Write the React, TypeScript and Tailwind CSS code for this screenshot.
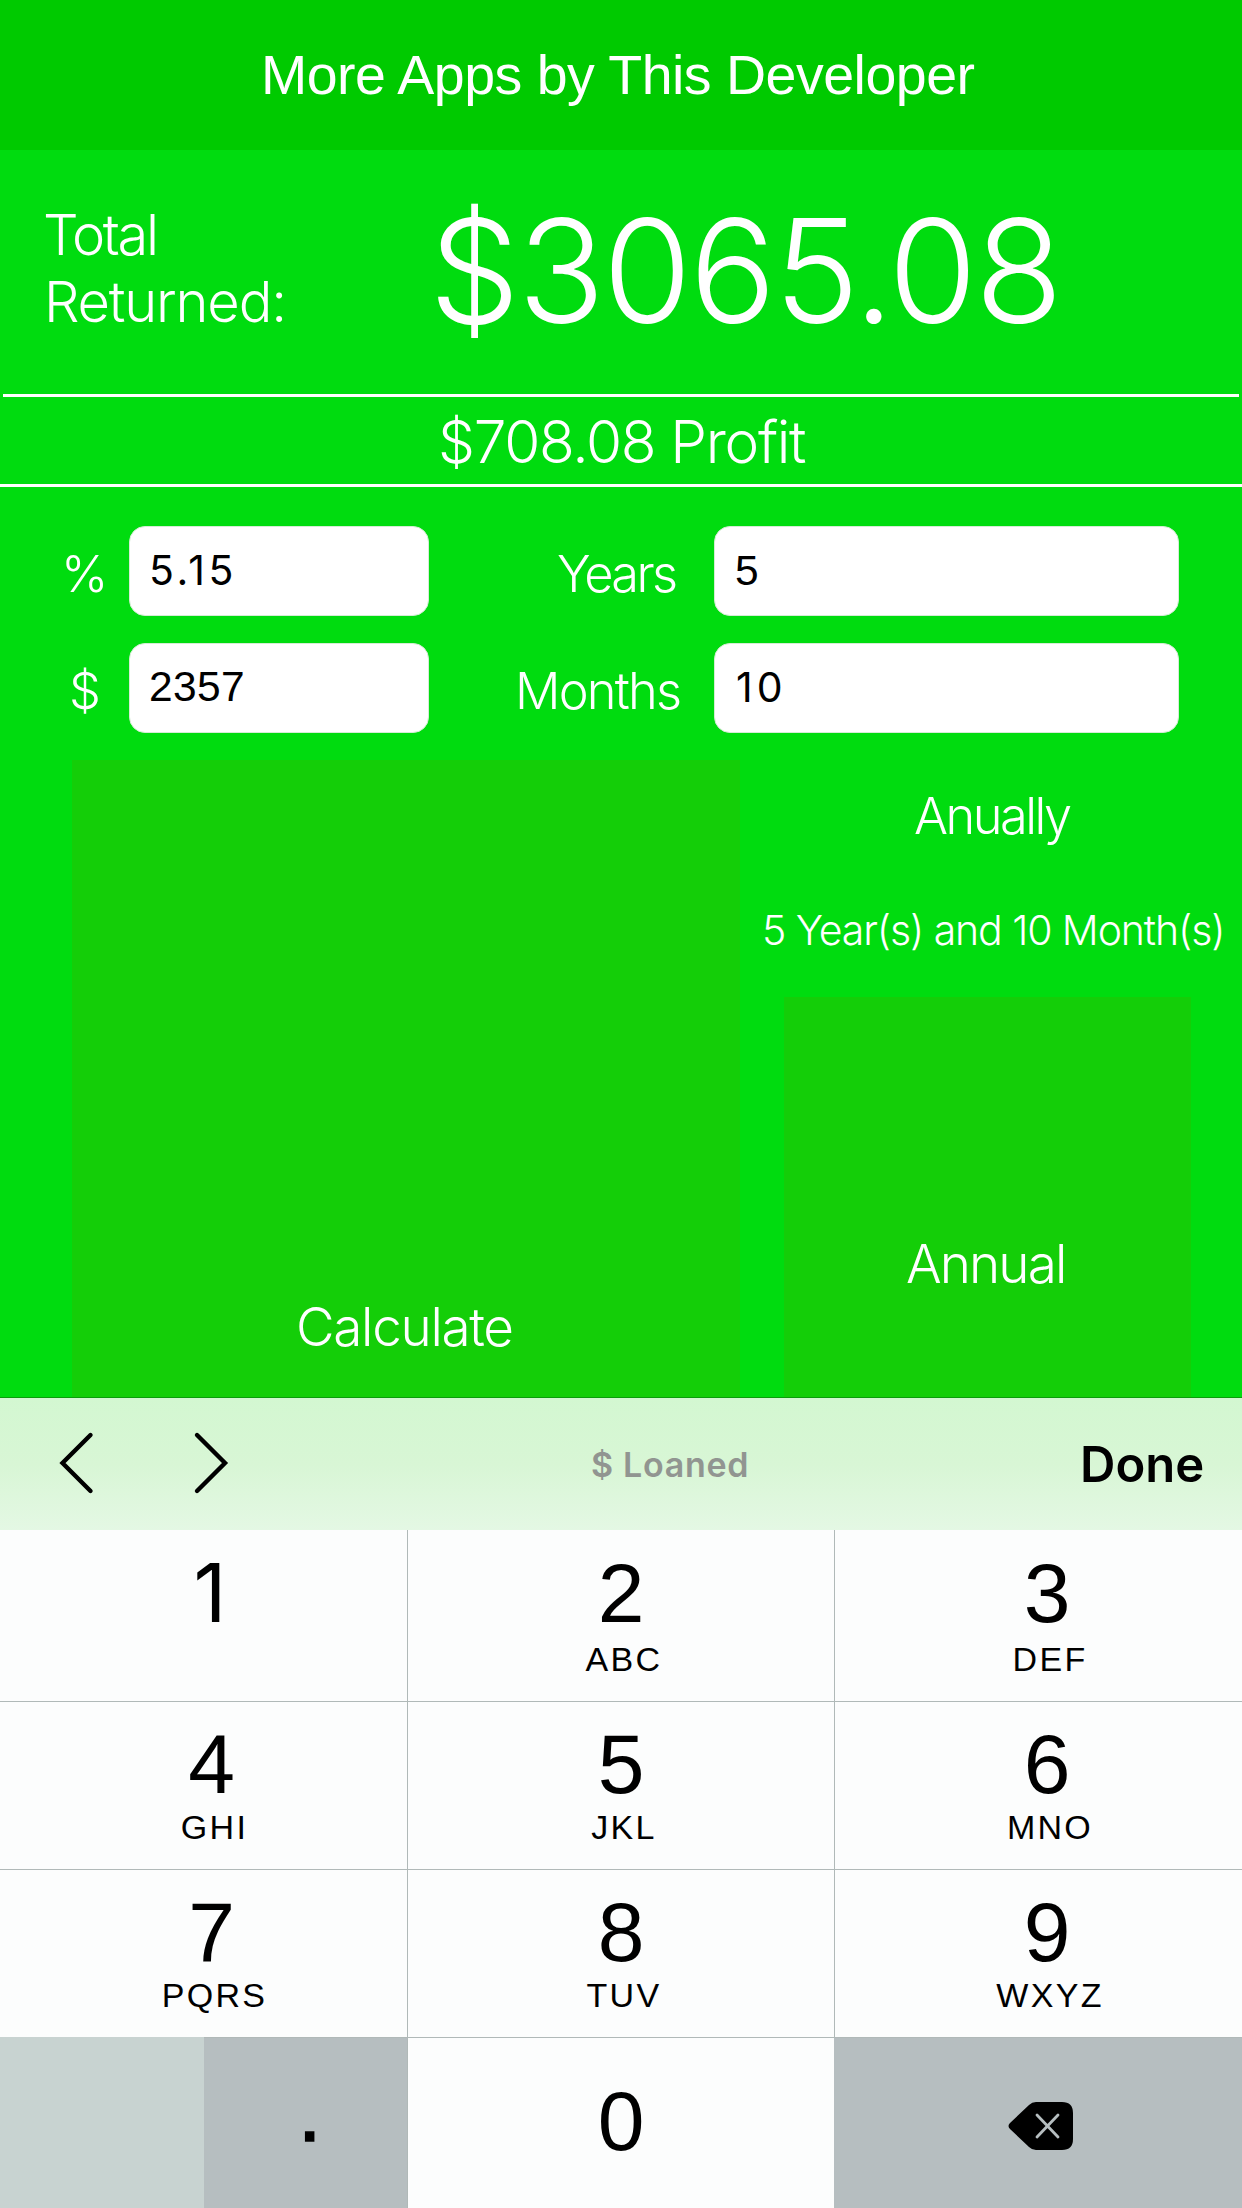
import React from "react";

const LIGHT = "font-[Inter,sans-serif] font-light whitespace-nowrap text-white";

function Field({ value, className }: { value: string; className: string }) {
  return (
    <div
      className={`flex h-[90px] items-center rounded-[16px] border border-[#d5ecd5] bg-white leading-none text-black ${className}`}
    >
      {value}
    </div>
  );
}

function Label({ text, className }: { text: string; className: string }) {
  return (
    <div className={`flex h-[90px] items-center pt-[6px] text-[50.5px] leading-none ${LIGHT} ${className}`}>
      {text}
    </div>
  );
}

interface KeyData {
  digit: string;
  letters?: string;
}

const ROWS: { height: string; keys: KeyData[] }[] = [
  { height: "h-[171px] pt-[1px]", keys: [{ digit: "1" }, { digit: "2", letters: "ABC" }, { digit: "3", letters: "DEF" }] },
  { height: "h-[168px] border-t", keys: [{ digit: "4", letters: "GHI" }, { digit: "5", letters: "JKL" }, { digit: "6", letters: "MNO" }] },
  { height: "h-[168px] border-t", keys: [{ digit: "7", letters: "PQRS" }, { digit: "8", letters: "TUV" }, { digit: "9", letters: "WXYZ" }] },
];

const COLUMNS = ["pl-[16px]", "border-l border-[#b0b9b8]", "border-l border-[#b0b9b8] pl-[17px]"];

function Key({ data, column, first }: { data: KeyData; column: number; first: boolean }) {
  return (
    <div className={`flex flex-col items-center text-black ${COLUMNS[column]} ${first ? "-mt-[1px] pt-[1px]" : ""}`}>
      <div
        className={`mt-[20px] h-[84px] leading-[84px] ${
          data.digit === "1" ? "pr-[3px] font-[Inter,sans-serif] text-[81px]" : "text-[84px]"
        }`}
      >
        {data.digit}
      </div>
      {data.letters && (
        <div className={`text-[34px] leading-[34px] tracking-[2.3px] pl-[6px] ${first ? "mt-[7px]" : "mt-[4px]"}`}>
          {data.letters}
        </div>
      )}
    </div>
  );
}

export default function App() {
  return (
    <div className="flex h-[2208px] w-[1242px] flex-col overflow-hidden bg-[#00dc0f] font-['Liberation_Sans',Arial,sans-serif]">
      <header className="h-[150px] bg-[#00ca00] pl-[261px] text-[55.5px] leading-[150px] tracking-[-0.5px] whitespace-nowrap text-white">
        More Apps by This Developer
      </header>

      <section className="flex h-[244px]">
        <div className={`w-[429px] pt-[52px] pl-[43px] text-[56px] leading-[67px] ${LIGHT}`}>
          <div className="tracking-[-2.3px]">Total</div>
          <div className="pl-[1px] tracking-[-1.2px]">Returned:</div>
        </div>
        <div className={`text-[144px] leading-[241px] tracking-[-2.2px] ${LIGHT}`}>$3065.08</div>
      </section>
      <div className="mx-[3px] h-[3px] shrink-0 bg-white" />
      <div className={`h-[87px] shrink-0 pl-[438px] text-[58.5px] leading-[90px] tracking-[-1.3px] ${LIGHT}`}>
        $708.08 Profit
      </div>
      <div className="h-[3px] shrink-0 bg-white" />

      <section className="mt-[39px] grid shrink-0 grid-cols-[129px_300px_285px_465px] gap-y-[27px]">
        <Label text="%" className="pl-[61px]" />
        <Field value="5.15" className="pb-[1px] pl-[19px] font-[Inter,sans-serif] text-[41px] tracking-[3.6px]" />
        <Label text="Years" className="pl-[128px] tracking-[-2.6px]" />
        <Field value="5" className="pl-[20px] text-[42.5px]" />
        <Label text="$" className="pl-[69px]" />
        <Field value="2357" className="pb-[1px] pl-[19px] text-[42.5px] tracking-[0.36px]" />
        <Label text="Months" className="pl-[86px] tracking-[-1.8px]" />
        <Field value="10" className="pb-[2px] pl-[21px] font-[Inter,sans-serif] text-[41px] tracking-[4px]" />
      </section>

      <section className="mt-[27px] flex h-[637px] shrink-0 pl-[72px]">
        <button className={`flex w-[668px] items-start bg-[#14ce08] pt-[501px] pl-[224px] text-[53px] leading-[133px] tracking-[-1.3px] ${LIGHT}`}>
          Calculate
        </button>
        <div className="flex w-[502px] flex-col">
          <div className={`pl-[174px] text-[50.5px] leading-[112px] tracking-[-2.5px] ${LIGHT}`}>Anually</div>
          <div className={`pl-[22px] text-[41px] leading-[116px] tracking-[-1.1px] ${LIGHT}`}>
            5 Year(s) and 10 Month(s)
          </div>
          <button className={`mt-[9px] ml-[44px] flex w-[407px] grow items-start bg-[#14ce08] pt-[200px] pl-[122px] text-[53px] leading-[135px] tracking-[-1.9px] ${LIGHT}`}>
            Annual
          </button>
        </div>
      </section>

      <nav className="flex h-[133px] shrink-0 items-center border-t border-[#0b9c0b] bg-linear-to-b from-[#d3f7d1] via-[#d8f6d5] to-[#e4f8e4]">
        <svg className="ml-[59px] -mt-[3px] h-[64px] w-[170px]" viewBox="0 0 170 64" fill="none" stroke="#000" strokeWidth="4.4" strokeLinecap="round">
          <path d="M31.5 4 3.5 32l28 28" />
          <path d="m138 4 28 28-28 28" />
        </svg>
        <span className="ml-[362px] w-[489px] font-[Inter,sans-serif] text-[34px] font-semibold tracking-[0.7px] whitespace-nowrap text-[#919591]">
          $ Loaned
        </span>
        <span className="pt-[2px] font-[Inter,sans-serif] text-[49px] font-semibold text-black">Done</span>
      </nav>

      <section className="flex h-[678px] shrink-0 flex-col bg-[#fcfdfd]">
        {ROWS.map((row, r) => (
          <div key={r} className={`grid shrink-0 grid-cols-[407px_427px_408px] border-[#b0b9b8] ${row.height}`}>
            {row.keys.map((k, c) => (
              <Key key={k.digit} data={k} column={c} first={r === 0} />
            ))}
          </div>
        ))}
        <div className="grid h-[171px] shrink-0 grid-cols-[204px_203px_427px_408px] text-[84px] leading-[84px]">
          <div className="bg-[#c8d3d1]" />
          <div className="border-t border-[#b0b9b8] bg-[#b6bec0] pt-[32px] pl-[94px] [-webkit-text-stroke:1.5px_black]">.</div>
          <div className="border-t border-l border-[#b0b9b8] pt-[41px] text-center">0</div>
          <div className="border-t border-[#b0b9b8] bg-[#b6bec0] pt-[63px] pl-[173px]">
            <svg className="block h-[50px] w-[67px]" viewBox="0 0 67 50">
              <path d="M29 1h26q11 0 11 11v26q0 11-11 11H29q-4 0-7-3L3 28q-3-3 0-6L22 4q3-3 7-3Z" fill="#000" />
              <path d="m30 14 21 22M51 14 30 36" stroke="#b6bec0" strokeWidth="2.8" strokeLinecap="round" />
            </svg>
          </div>
        </div>
      </section>
    </div>
  );
}
